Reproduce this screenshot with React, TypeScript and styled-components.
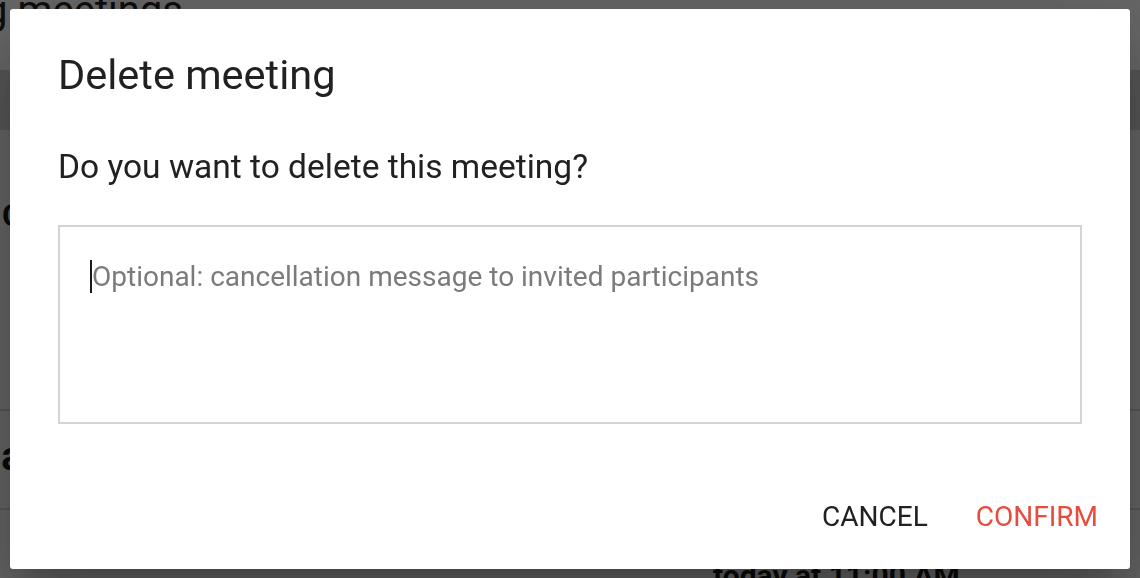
import React from "react";
import styled, { createGlobalStyle } from "styled-components";

const GlobalStyle = createGlobalStyle`
  html, body {
    margin: 0;
    padding: 0;
  }
  body {
    font-family: Roboto, "Liberation Sans", Arial, sans-serif;
    background: #ffffff;
    -webkit-font-smoothing: antialiased;
  }
`;

/* ---------- page behind the dialog ---------- */

const Page = styled.div`
  width: 1140px;
  height: 578px;
  overflow: hidden;
  background: #ffffff;
  display: flex;
  flex-direction: column;
`;

const PageTitle = styled.h1`
  margin: -13px 0 35px -174px;
  font-size: 40px;
  line-height: 48px;
  font-weight: 400;
  color: #222222;
  white-space: nowrap;
`;

const Toolbar = styled.div`
  flex-shrink: 0;
  height: 60px;
  background: #d6d6d6;
`;

const ListRow = styled.div<{ $height: number; $divider?: boolean; $pad: number }>`
  flex-shrink: 0;
  box-sizing: border-box;
  height: ${(p) => p.$height}px;
  padding-top: ${(p) => p.$pad}px;
  border-bottom: ${(p) => (p.$divider ? "2px solid #d8d8d8" : "none")};
  background: #fafafa;
  display: flex;
`;

const RowTitle = styled.span<{ $indent: number; $size: number }>`
  margin-left: ${(p) => p.$indent}px;
  font-size: ${(p) => p.$size}px;
  line-height: 1.2;
  font-weight: 700;
  color: #1a1a1a;
  white-space: nowrap;
`;

/* ---------- dialog ---------- */

const Backdrop = styled.div`
  position: fixed;
  inset: 0;
  background: rgba(0, 0, 0, 0.6);
  display: flex;
  align-items: center;
  justify-content: center;
`;

const Dialog = styled.div`
  box-sizing: border-box;
  width: 1120px;
  height: 560px;
  background: #ffffff;
  border-radius: 3px;
  box-shadow: 0 22px 30px -14px rgba(0, 0, 0, 0.2),
    0 48px 76px 6px rgba(0, 0, 0, 0.14), 0 18px 92px 16px rgba(0, 0, 0, 0.12);
  display: flex;
  flex-direction: column;
`;

const DialogTitle = styled.h2`
  margin: 0;
  padding: 34px 48px 30px;
  font-size: 41.5px;
  line-height: 64px;
  font-weight: 400;
  color: #212121;
`;

const DialogContent = styled.div`
  flex: 1;
  padding: 0 48px;
  display: flex;
  flex-direction: column;
`;

const Question = styled.p`
  margin: 0 0 34px;
  padding-top: 6px;
  font-size: 33.5px;
  line-height: 48px;
  color: #212121;
`;

const MessageBox = styled.div`
  box-sizing: border-box;
  height: 199px;
  border: 2px solid #d4d4d4;
  padding: 33px 30px;
  display: flex;
  align-items: flex-start;
`;

const Caret = styled.span`
  flex-shrink: 0;
  width: 2px;
  height: 33px;
  margin-right: 0;
  background: #1a1a1a;
`;

const Placeholder = styled.span`
  font-size: 28px;
  line-height: 33px;
  color: #7b7b7b;
  white-space: nowrap;
`;

const DialogActions = styled.div`
  display: flex;
  justify-content: flex-end;
  gap: 16px;
  padding: 16px;
`;

const ActionButton = styled.button<{ $tone: "neutral" | "danger" }>`
  border: none;
  background: transparent;
  padding: 12px 16px;
  font-family: Roboto, "Liberation Sans", Arial, sans-serif;
  font-size: 28px;
  line-height: 49px;
  font-weight: 400;
  text-transform: uppercase;
  color: ${(p) => (p.$tone === "danger" ? "#e74c3c" : "#212121")};
  cursor: pointer;
`;

export default function App() {
  return (
    <>
      <GlobalStyle />
      <Page>
        <PageTitle>Upcoming meetings</PageTitle>
        <Toolbar />
        <ListRow $height={281} $pad={66} $divider>
          <RowTitle $indent={2} $size={32}>
            Calendar sync
          </RowTitle>
        </ListRow>
        <ListRow $height={99} $pad={22} $divider>
          <RowTitle $indent={-35} $size={40}>
            Planning review
          </RowTitle>
        </ListRow>
        <ListRow $height={80} $pad={48}>
          <RowTitle $indent={713} $size={30}>
            today at 11:00 AM
          </RowTitle>
        </ListRow>
      </Page>
      <Backdrop>
        <Dialog role="dialog" aria-labelledby="delete-title">
          <DialogTitle id="delete-title">Delete meeting</DialogTitle>
          <DialogContent>
            <Question>Do you want to delete this meeting?</Question>
            <MessageBox>
              <Caret />
              <Placeholder>
                Optional: cancellation message to invited participants
              </Placeholder>
            </MessageBox>
          </DialogContent>
          <DialogActions>
            <ActionButton $tone="neutral">Cancel</ActionButton>
            <ActionButton $tone="danger">Confirm</ActionButton>
          </DialogActions>
        </Dialog>
      </Backdrop>
    </>
  );
}
